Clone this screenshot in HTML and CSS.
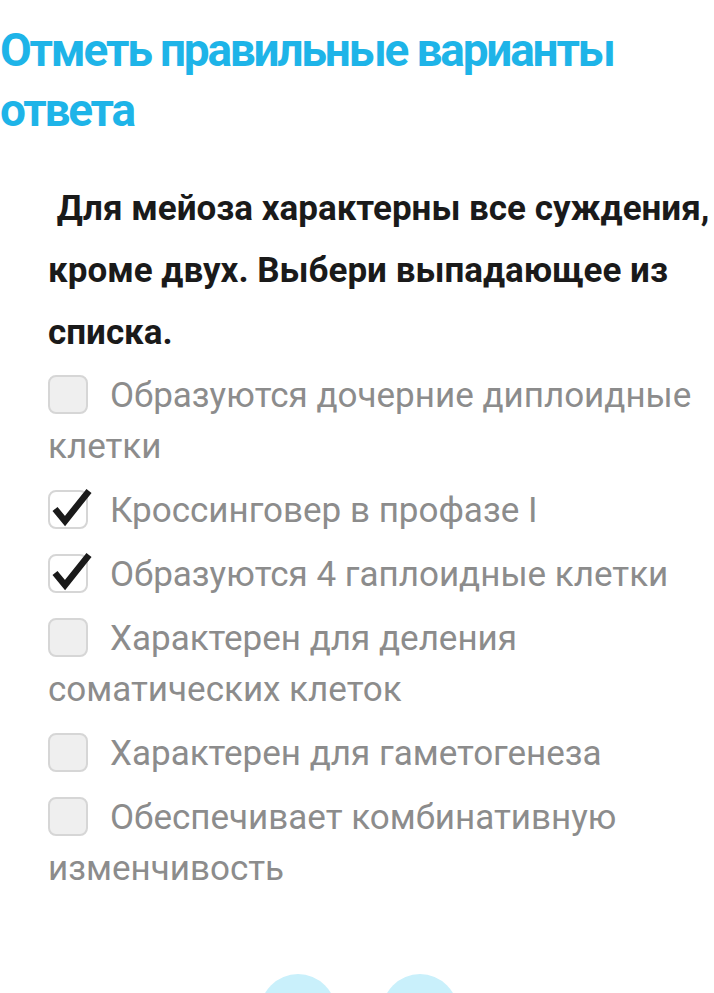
FILE: index.html
```html
<!DOCTYPE html>
<html lang="ru">
<head>
<meta charset="utf-8">
<link rel="stylesheet" href="styles.css">
</head>
<body>
<div class="page">
  <h1 class="title">Отметь правильные варианты ответа</h1>
  <p class="question">&nbsp;Для мейоза характерны все суждения, кроме двух. Выбери выпадающее из списка.</p>
  <ul class="options">
    <li class="option"><span class="box"></span>Образуются дочерние диплоидные клетки</li>
    <li class="option"><span class="box checked"><svg viewBox="0 0 44 44" width="44" height="44"><path d="M7 22 L17 34 L41 4" fill="none" stroke="#1a1a1a" stroke-width="6.5" stroke-linejoin="miter" stroke-linecap="butt"/></svg></span>Кроссинговер в профазе I</li>
    <li class="option"><span class="box checked"><svg viewBox="0 0 44 44" width="44" height="44"><path d="M7 22 L17 34 L41 4" fill="none" stroke="#1a1a1a" stroke-width="6.5" stroke-linejoin="miter" stroke-linecap="butt"/></svg></span>Образуются 4 гаплоидные клетки</li>
    <li class="option"><span class="box"></span>Характерен для деления соматических клеток</li>
    <li class="option"><span class="box"></span>Характерен для гаметогенеза</li>
    <li class="option"><span class="box"></span>Обеспечивает комбинативную изменчивость</li>
  </ul>
  <div class="nav">
    <span class="dot"></span>
    <span class="dot"></span>
  </div>
</div>
</body>
</html>
```
FILE: styles.css
```css
html, body {
  margin: 0;
  padding: 0;
  background: #ffffff;
  overflow: hidden;
}
.page {
  width: 714px;
  height: 993px;
  position: relative;
  overflow: hidden;
}
.title {
  margin: 0;
  padding: 20px 0 0 0;
  font-family: "Roboto", sans-serif;
  font-weight: 700;
  font-size: 46px;
  letter-spacing: -2.2px;
  line-height: 60px;
  color: #1eb4e8;
  width: 680px;
}
.question {
  margin: 38px 0 0 48px;
  font-family: "Roboto", sans-serif;
  font-weight: 700;
  font-size: 35px;
  line-height: 62px;
  color: #1a1a1a;
  width: 666px;
}
.options {
  list-style: none;
  margin: 6px 0 0 48px;
  padding: 0;
  width: 666px;
  font-family: "Roboto", sans-serif;
  font-size: 35px;
  line-height: 51px;
  color: #8c8c8c;
}
.option {
  margin-bottom: 13px;
}
.box {
  display: inline-block;
  box-sizing: border-box;
  width: 40px;
  height: 39px;
  border: 2px solid #d6d6d6;
  border-radius: 8px;
  background: #efefef;
  vertical-align: -7px;
  margin-right: 22px;
  position: relative;
}
.box.checked {
  background: #ffffff;
}
.box svg {
  position: absolute;
  left: -2px;
  top: -5px;
}
.nav {
  position: absolute;
  left: 0;
  right: 0;
  top: 974px;
  display: flex;
  justify-content: center;
  gap: 46px;
  padding-left: 4px;
}
.dot {
  width: 76px;
  height: 76px;
  border-radius: 50%;
  background: #c9f0fb;
}
```
